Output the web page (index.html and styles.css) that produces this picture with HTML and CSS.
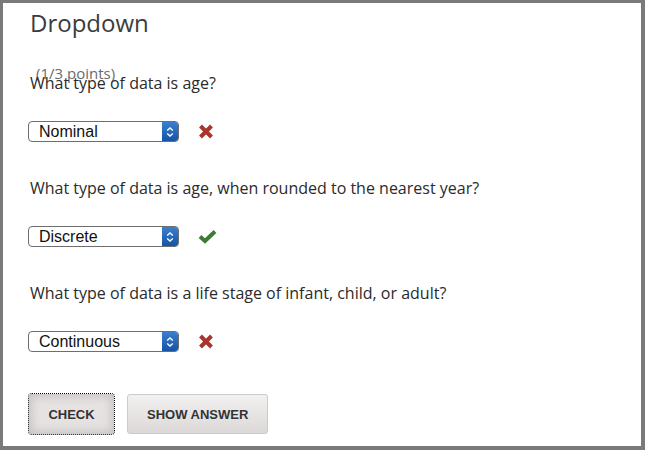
FILE: index.html
```html
<!DOCTYPE html>
<html lang="en">
<head>
<meta charset="utf-8">
<title>Dropdown</title>
<link rel="stylesheet" href="styles.css">
</head>
<body>
<div class="frame">
  <h2 class="title">Dropdown</h2>
  <div class="points">(1/3 points)</div>
  <div class="problem">
    <div class="question">
      <p class="prompt">What type of data is age?</p>
      <div class="answer">
        <div class="select"><span class="value">Nominal</span><span class="arrow"><svg width="8" height="12" viewBox="0 0 8 12"><path d="M1.2 4.6 L4 2 L6.8 4.6 M1.2 7.4 L4 10 L6.8 7.4" fill="none" stroke="#fff" stroke-width="1.4"/></svg></span></div>
        <svg class="mark" width="16" height="15" viewBox="0 0 16 15"><path d="M2.5 2 L13.5 13 M13.5 2 L2.5 13" stroke="#a8362c" stroke-width="4" stroke-linecap="butt"/></svg>
      </div>
    </div>
    <div class="question">
      <p class="prompt">What type of data is age, when rounded to the nearest year?</p>
      <div class="answer">
        <div class="select"><span class="value">Discrete</span><span class="arrow"><svg width="8" height="12" viewBox="0 0 8 12"><path d="M1.2 4.6 L4 2 L6.8 4.6 M1.2 7.4 L4 10 L6.8 7.4" fill="none" stroke="#fff" stroke-width="1.4"/></svg></span></div>
        <svg class="mark" width="19" height="15" viewBox="0 0 19 15"><path d="M2 7.5 L7 12 L17 2.5" fill="none" stroke="#3e7a35" stroke-width="4"/></svg>
      </div>
    </div>
    <div class="question">
      <p class="prompt">What type of data is a life stage of infant, child, or adult?</p>
      <div class="answer">
        <div class="select"><span class="value">Continuous</span><span class="arrow"><svg width="8" height="12" viewBox="0 0 8 12"><path d="M1.2 4.6 L4 2 L6.8 4.6 M1.2 7.4 L4 10 L6.8 7.4" fill="none" stroke="#fff" stroke-width="1.4"/></svg></span></div>
        <svg class="mark" width="16" height="15" viewBox="0 0 16 15"><path d="M2.5 2 L13.5 13 M13.5 2 L2.5 13" stroke="#a8362c" stroke-width="4" stroke-linecap="butt"/></svg>
      </div>
    </div>
  </div>
  <div class="actions">
    <button class="btn btn-check">CHECK</button>
    <button class="btn btn-show">SHOW ANSWER</button>
  </div>
</div>
</body>
</html>
```
FILE: styles.css
```css
html, body {
  margin: 0;
  padding: 0;
}
body {
  width: 645px;
  height: 450px;
  overflow: hidden;
  font-family: "Open Sans", "DejaVu Sans", sans-serif;
}
.frame {
  box-sizing: border-box;
  width: 645px;
  height: 450px;
  border-style: solid;
  border-color: #7a7a7a;
  border-width: 3px 4px 4px 3px;
  background: #fff;
  padding: 0 0 0 25px;
  display: flex;
  flex-direction: column;
}
.title {
  margin: 4px 0 0 2px;
  font-size: 24px;
  font-weight: 400;
  line-height: 32px;
  color: #3c3c3c;
}
.points {
  margin: 26px 0 -8px 8px;
  font-size: 15px;
  line-height: 16px;
  color: #6b6b6b;
}
.problem {
  display: flex;
  flex-direction: column;
  gap: 36px;
}
.prompt {
  margin: 0 0 0 2px;
  font-size: 16px;
  line-height: 20px;
  color: #2b2b2b;
}
.answer {
  display: flex;
  align-items: center;
  gap: 19px;
  margin-top: 28px;
}
.select {
  box-sizing: border-box;
  width: 151px;
  height: 21px;
  border: 1px solid #6e6e6e;
  border-radius: 4px;
  display: flex;
  align-items: stretch;
  overflow: hidden;
  background: #fff;
}
.value {
  flex: 1;
  padding-left: 10px;
  font-family: "Liberation Sans", Arial, sans-serif;
  font-size: 16px;
  line-height: 19px;
  color: #111;
}
.arrow {
  width: 16px;
  display: flex;
  align-items: center;
  justify-content: center;
  background: linear-gradient(#3a7fd0, #1553a6);
}
.mark {
  display: block;
}
.actions {
  display: flex;
  align-items: center;
  gap: 13px;
  margin-top: 42px;
}
.btn {
  font-family: "Liberation Sans", Arial, sans-serif;
  font-weight: 700;
  font-size: 13px;
  color: #333;
  border-radius: 3px;
  height: 40px;
  padding: 0 19px;
  cursor: pointer;
}
.btn-check {
  width: 85px;
  margin-left: 1px;
  padding: 0;
  border: none;
  background: #e6e2e2;
  box-shadow: inset 0 0 8px 3px #c9c4c4;
  outline: 1px dotted #000;
  outline-offset: 0;
}
.btn-show {
  border: 1px solid #cdcaca;
  background: linear-gradient(#f2f0f0, #dcd8d8);
}
```
